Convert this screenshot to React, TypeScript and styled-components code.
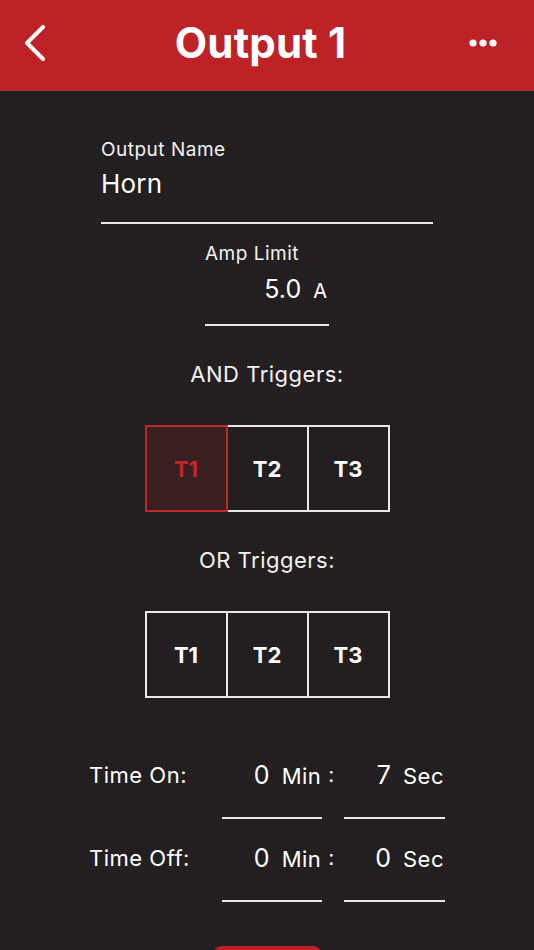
import styled, { createGlobalStyle } from "styled-components";

const GlobalStyle = createGlobalStyle`
  html, body {
    margin: 0;
    padding: 0;
    background: #231f20;
  }
  body {
    font-family: Inter, "Noto Sans", sans-serif;
    color: #ffffff;
  }
`;

const Page = styled.div`
  width: 534px;
  height: 950px;
  overflow: hidden;
  display: flex;
  flex-direction: column;
  background: #231f20;
`;

const Header = styled.header`
  height: 91px;
  flex-shrink: 0;
  background: #bd2227;
  display: flex;
  align-items: center;
  justify-content: space-between;
  padding: 0 37px 6px 24px;
  box-sizing: border-box;
`;

const Title = styled.h1`
  margin: 0;
  font-size: 42px;
  font-weight: 700;
  letter-spacing: 0.2px;
  color: #fff;
`;

const IconButton = styled.div<{ $end?: boolean }>`
  width: 40px;
  display: flex;
  align-items: center;
  justify-content: ${(p) => (p.$end ? "flex-end" : "flex-start")};
`;

const Content = styled.main`
  display: flex;
  flex-direction: column;
  align-items: center;
  padding-top: 48px;
`;

const NameField = styled.div`
  width: 332px;
  display: flex;
  flex-direction: column;
  border-bottom: 2px solid #e8e8e8;
  padding-bottom: 23px;
`;

const Label = styled.div`
  font-size: 19px;
  line-height: 22px;
  letter-spacing: 0.5px;
  color: #f2f2f2;
`;

const NameValue = styled.div`
  font-size: 26px;
  line-height: 30px;
  letter-spacing: 0.2px;
  margin-top: 8px;
`;

const AmpBlock = styled.div`
  width: 124px;
  margin-top: 19px;
  display: flex;
  flex-direction: column;
`;

const AmpValueRow = styled.div`
  display: flex;
  justify-content: flex-end;
  align-items: baseline;
  gap: 12px;
  padding: 9px 2px 20px 0;
  border-bottom: 2px solid #e8e8e8;
`;

const Value = styled.span`
  font-size: 25px;
  line-height: 30px;
`;

const Unit = styled.span`
  font-size: 20px;
  line-height: 24px;
`;

const SectionTitle = styled.div<{ $top: number }>`
  margin-top: ${(p) => p.$top}px;
  font-size: 22px;
  line-height: 28px;
  letter-spacing: 0.5px;
  color: #f2f2f2;
`;

const Segments = styled.div`
  margin-top: 37px;
  display: flex;
`;

const Segment = styled.div<{ $active?: boolean; $first?: boolean }>`
  width: 83px;
  height: 87px;
  box-sizing: border-box;
  display: flex;
  align-items: center;
  justify-content: center;
  font-size: 22px;
  font-weight: 700;
  border: 2px solid ${(p) => (p.$active ? "#c0262c" : "#e8e8e8")};
  margin-left: ${(p) => (p.$first ? "0" : "-2px")};
  position: relative;
  z-index: ${(p) => (p.$active ? 1 : 0)};
  background: ${(p) => (p.$active ? "#3a1f21" : "transparent")};
  color: ${(p) => (p.$active ? "#c0262c" : "#fff")};
`;

const TimeGrid = styled.div`
  margin-top: 54px;
  width: 356px;
  display: flex;
  flex-direction: column;
  gap: 16px;
`;

const TimeRow = styled.div`
  display: flex;
  align-items: flex-start;
`;

const TimeLabel = styled.div`
  width: 133px;
  font-size: 22px;
  line-height: 26px;
  letter-spacing: 0.5px;
  padding-top: 10px;
`;

const TimeField = styled.div`
  width: 100px;
  display: flex;
  justify-content: flex-end;
  align-items: baseline;
  gap: 12px;
  padding: 8px 1px 27px 0;
  border-bottom: 2px solid #e8e8e8;
`;

const Colon = styled.span`
  width: 22px;
  padding: 8px 0 0 6px;
  box-sizing: border-box;
  font-size: 21px;
  line-height: 30px;
`;

const TimeUnit = styled.span`
  font-size: 22px;
  line-height: 24px;
  letter-spacing: 0.5px;
`;

const SaveButton = styled.div`
  margin-top: 44px;
  width: 107px;
  height: 40px;
  border-radius: 8px;
  background: #bd2227;
`;

function Chevron() {
  return (
    <svg width="22" height="36" viewBox="0 0 22 36" fill="none">
      <path d="M19 2 L3 18 L19 34" stroke="#fff" strokeWidth="4" strokeLinecap="round" strokeLinejoin="round" />
    </svg>
  );
}

function Dots() {
  return (
    <svg width="28" height="8" viewBox="0 0 28 8">
      <circle cx="4" cy="4" r="3.6" fill="#fff" />
      <circle cx="14" cy="4" r="3.6" fill="#fff" />
      <circle cx="24" cy="4" r="3.6" fill="#fff" />
    </svg>
  );
}

function TriggerGroup({ active }: { active?: number }) {
  return (
    <Segments>
      {["T1", "T2", "T3"].map((t, i) => (
        <Segment key={t} $first={i === 0} $active={active === i}>
          {t}
        </Segment>
      ))}
    </Segments>
  );
}

function TimeLine({ label, min, sec }: { label: string; min: string; sec: string }) {
  return (
    <TimeRow>
      <TimeLabel>{label}</TimeLabel>
      <TimeField>
        <Value>{min}</Value>
        <TimeUnit>Min</TimeUnit>
      </TimeField>
      <Colon>:</Colon>
      <TimeField>
        <Value>{sec}</Value>
        <TimeUnit>Sec</TimeUnit>
      </TimeField>
    </TimeRow>
  );
}

export default function App() {
  return (
    <Page>
      <GlobalStyle />
      <Header>
        <IconButton>
          <Chevron />
        </IconButton>
        <Title>Output 1</Title>
        <IconButton $end>
          <Dots />
        </IconButton>
      </Header>
      <Content>
        <NameField>
          <Label>Output Name</Label>
          <NameValue>Horn</NameValue>
        </NameField>
        <AmpBlock>
          <Label>Amp Limit</Label>
          <AmpValueRow>
            <Value>5.0</Value>
            <Unit>A</Unit>
          </AmpValueRow>
        </AmpBlock>
        <SectionTitle $top={34}>AND Triggers:</SectionTitle>
        <TriggerGroup active={0} />
        <SectionTitle $top={34}>OR Triggers:</SectionTitle>
        <TriggerGroup />
        <TimeGrid>
          <TimeLine label="Time On:" min="0" sec="7" />
          <TimeLine label="Time Off:" min="0" sec="0" />
        </TimeGrid>
        <SaveButton />
      </Content>
    </Page>
  );
}
